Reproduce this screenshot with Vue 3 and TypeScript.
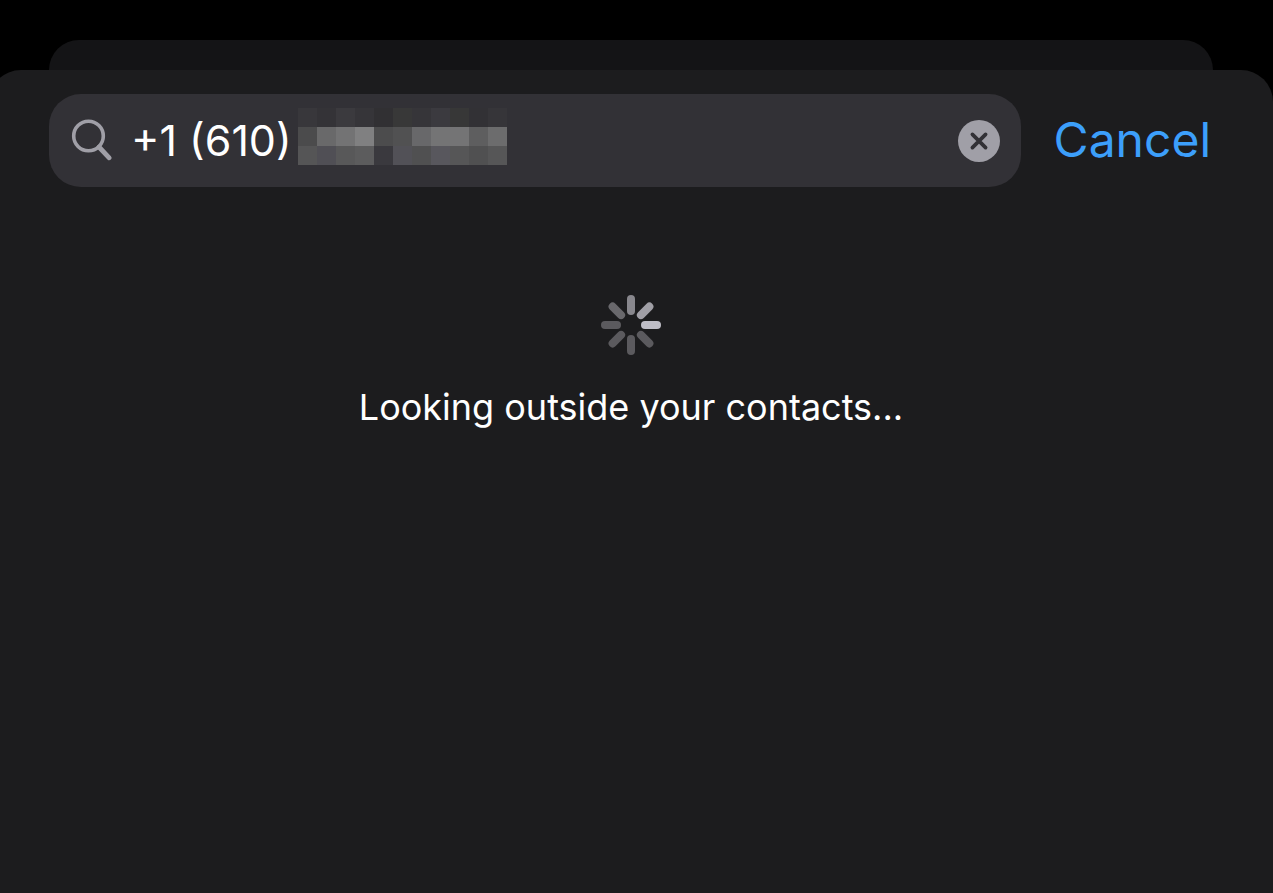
<script setup lang="ts">
import { ref } from 'vue'

const query = ref<string>('+1 (610)')

const mosaic: string[][] = [
  ['#38373b', '#343337', '#3b3a3e', '#363539', '#313033', '#383838', '#363539', '#3b3a3f', '#373737', '#323135', '#363539'],
  ['#4b4b4c', '#69696a', '#737374', '#808081', '#4c4c4d', '#515152', '#68686a', '#747475', '#747475', '#5e5e5f', '#6c6c6d'],
  ['#555556', '#504f55', '#585859', '#5c5c5d', '#3a393e', '#525157', '#505051', '#58575d', '#565657', '#505051', '#565657'],
]

const spokes: { angle: number; color: string }[] = [
  { angle: 0, color: '#88878d' },
  { angle: 45, color: '#a09fa6' },
  { angle: 90, color: '#bebdc6' },
  { angle: 135, color: '#5b5a5e' },
  { angle: 180, color: '#5b5a5e' },
  { angle: 225, color: '#5b5a5e' },
  { angle: 270, color: '#5b5a5e' },
  { angle: 315, color: '#69686c' },
]
</script>

<template>
  <div class="screen">
    <div class="back-sheet"></div>
    <main class="sheet">
      <form class="search-row" role="search" @submit.prevent>
        <div class="field">
          <svg class="search-icon" viewBox="0 0 42 42" aria-hidden="true">
            <circle cx="17.5" cy="16" r="14.8" fill="none" stroke="currentColor" stroke-width="3.6" />
            <path d="M28 27L38.2 37.8" fill="none" stroke="currentColor" stroke-width="4.8" stroke-linecap="round" />
          </svg>
          <input v-model="query" class="query" type="text" aria-label="Search contacts" />
          <svg class="mosaic" viewBox="0 0 209 57" shape-rendering="crispEdges" aria-hidden="true">
            <template v-for="(row, y) in mosaic" :key="y">
              <rect v-for="(fill, x) in row" :key="x" :x="x * 19" :y="y * 19" width="19" height="19" :fill="fill" />
            </template>
          </svg>
          <button class="clear" type="button" aria-label="Clear text" @click="query = ''">
            <svg viewBox="0 0 42 42" aria-hidden="true">
              <circle cx="21" cy="21" r="21" fill="#a09fa7" />
              <path d="M14.4 14.4L27.6 27.6M27.6 14.4L14.4 27.6" fill="none" stroke="#323136" stroke-width="3.7" stroke-linecap="round" />
            </svg>
          </button>
        </div>
        <button class="cancel" type="button">Cancel</button>
      </form>
      <div class="status" role="status">
        <svg class="spinner" viewBox="0 0 60 60" aria-hidden="true">
          <rect
            v-for="spoke in spokes"
            :key="spoke.angle"
            x="26"
            y="0"
            width="8"
            height="20"
            rx="4"
            :fill="spoke.color"
            :transform="`rotate(${spoke.angle} 30 30)`"
          />
        </svg>
        <p class="message">Looking outside your contacts...</p>
      </div>
    </main>
  </div>
</template>

<style>
body {
  margin: 0;
  background: #000;
}
</style>

<style scoped>
.screen {
  box-sizing: border-box;
  display: flex;
  flex-direction: column;
  min-height: 100vh;
  padding-top: 40px;
  overflow: hidden;
  background: #000;
  font-family: Inter, "Liberation Sans", sans-serif;
}

.back-sheet {
  height: 30px;
  margin: 0 60px 0 49px;
  border-radius: 30px 30px 0 0;
  background: #141416;
}

.sheet {
  flex: 1;
  margin-left: -11px;
  padding: 24px 60px;
  border-radius: 32px 32px 0 0;
  background: #1c1c1e;
}

.search-row {
  display: flex;
  align-items: center;
}

.field {
  flex: 1;
  box-sizing: border-box;
  display: flex;
  align-items: center;
  min-width: 0;
  height: 93px;
  padding: 0 21px 0 22px;
  border-radius: 32px;
  background: #323136;
}

.search-icon {
  flex: none;
  width: 42px;
  height: 42px;
  overflow: visible;
  color: #a09fa7;
}

.query {
  width: 167px;
  height: 60px;
  margin-left: 18px;
  padding: 0 0 2px;
  border: 0;
  outline: 0;
  background: transparent;
  color: #fff;
  font: 400 43px/60px Inter, "Liberation Sans", sans-serif;
}

.mosaic {
  flex: none;
  width: 209px;
  height: 57px;
  margin-bottom: 8px;
}

.clear {
  flex: none;
  width: 42px;
  height: 42px;
  margin-left: auto;
  padding: 0;
  border: 0;
  border-radius: 50%;
  background: none;
  cursor: pointer;
}

.clear svg {
  display: block;
}

.cancel {
  flex: none;
  width: 192px;
  padding: 0 2px 2px 0;
  border: 0;
  background: none;
  color: #3c9ffb;
  font: 400 48px/60px Inter, "Liberation Sans", sans-serif;
  text-align: right;
  cursor: pointer;
}

.status {
  display: flex;
  flex-direction: column;
  align-items: center;
  padding-top: 108px;
}

.spinner {
  width: 60px;
  height: 60px;
}

.message {
  margin: 30px 0 0;
  color: #fff;
  font-size: 36px;
  line-height: 44px;
  text-align: center;
}
</style>
